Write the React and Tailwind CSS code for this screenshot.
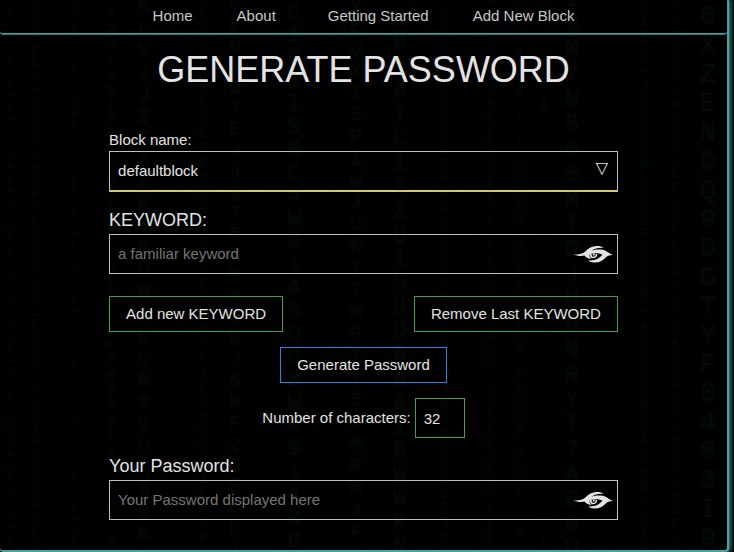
import React from 'react';

const LEVELS = {
  4: 'text-[3px] leading-[4px]',
  5: 'text-[4px] leading-[5px]',
  6: 'text-[5px] leading-[6px]',
  8: 'text-[6px] leading-[8px]',
  11: 'text-[10px] leading-[11px]',
  12: 'text-[11px] leading-[12px]',
  13: 'text-[12px] leading-[13px]',
  14: 'text-[13px] leading-[14px]',
  15: 'text-[14px] leading-[15px]',
  16: 'text-[15px] leading-[16px]',
  21: 'text-[20px] leading-[21px]',
  22: 'text-[21px] leading-[22px]',
  23: 'text-[22px] leading-[23px]',
  24: 'text-[23px] leading-[24px]',
  25: 'text-[24px] leading-[25px]',
  29: 'text-[28px] leading-[29px]',
};

// Falling code columns: centre x, row pitch, centre y of the first glyph, glyphs.
const COLUMNS = [
  [10, 12, 0, '1K0VLC15M1MY2QRPRS90R11WYULSQ5AS189QQOEGED0DH570'],
  [35, 13, 1, 'AWF7BK76XW04100RJLZC3T1U1E80DJ7GN8F1WI0A0PSE'],
  [59, 5, 2, 'KUE6S0QC4XQYVFUE1ANS0DE0CC1066J1X03XJACG60XZ1G3060FQ'],
  [74, 11, 4, '00E010SSVGREY17YPT1TCMCT0YK3W1LGCNA7LTOO711UOFAMWTH9K'],
  [95, 6, 2, 'WREXNXSYXEQ1S0U3NVT1JJ31IXQ8REIYGEIJPEAP1EX0N06KV1PKURPKH10VLWZT6NNW135I'],
  [111, 15, 1, 'J5Z5L9Q10YNJOPT1DZJ1DF0KOWMR0TS7J3Q7A'],
  [144, 22, 7, 'NLVJJ2TZZK1GVH1DCR8COA50RNT'],
  [183, 8, 2, 'V0F7YANW1RKMEC00W9UGNYSC265EI1PF0NBGTUR1EEVAKEBKP7X5DG210NEW7W40E6'],
  [203, 15, 0, 'ON31SG8N8RTPDORN3THB1R47FIKTENKLSRMJP6A'],
  [235, 21, 4, 'OLD1G7EJJ3T5CMXXDJ5HFVG50D1B'],
  [273, 8, 2, 'ANAOWEP1MOPECISVJ1S1ZVA3MSTKXUANIHIVSPFHBI8MRYWB18S1ZNEWH13VSWEK1ZZ8AK'],
  [294, 23, 13, 'C191I9BC4W01A0OO8WN914RDR'],
  [335, 8, 2, 'NAUTURCSAUOGR1ESTOGZIA7MFSV3ZUJIIT7SENGC0X8Q7ARTHE39FAZT4ARCVR1WL0'],
  [356, 22, 5, 'VEQX1SP1WJONT7MPTY50MRM4FV'],
  [400, 24, 19, 'J8I8IC17ZQ15DD8W810WWFN'],
  [445, 15, 0, '7SCXSFV1C5ZDPHP10QHAD1CG0W9B0AS4ECD9ZO'],
  [473, 8, 2, 'EFAORYJSTMI8HXVR2O1UNPCYUKNOM6FZRRLCUAD0SMYA6UCSEAGMO7EZ0CSLPGKRYU1WOI'],
  [490, 13, 2, 'WGUEYXLJKNIEWXIZYACS1PDKLJWDOJ338YR8RUO1LDEA'],
  [519, 13, 0, 'YYGAOSLA2Y11JDOOPMUQ1RZBG12MCMKXSW0953FUYH'],
  [544, 12, 2, 'WK7ZSNG0WBZQO1DOI1IJI00PHYWO0GM1YYSOKS00U6S03E'],
  [572, 25, 0, 'I9MYNS05MTDJUGNRYT7A00UU'],
  [616, 4, 1, 'EMEIUIYMXMYIVENCIOLMNSOIWEREYYAWMRSYSYRE0SIYCKRMWWYSEAMWESHSYRNYERWSISXY'],
  [627, 5, 1, '188ZTNMTIWEPNN1P1BZ162OXNIPTNYGARDVCASESDVEFKNWINMUNIUZRYSKGHURGPUYFBSEO'],
  [644, 16, 7, 'G11P4JG000MV50E200R4A8PQ0R91ZWB7XI0'],
  [675, 14, 7, 'V116QC1K60I1EF6ZFBZAXX7QAXGFQ410D51K0F1B'],
  [708, 29, 17, '6XZENDQ9DGTYF0483I9'],
];

function CodeRain() {
  return (
    <div
      aria-hidden="true"
      className="pointer-events-none absolute inset-0 select-none overflow-hidden font-['Liberation_Mono',monospace] text-[#2f8f48]/6 [text-shadow:0_0_6px_rgba(60,150,80,0.07)]"
    >
      {COLUMNS.map(([x, pitch, y, glyphs]) => (
        <div
          key={x}
          className={`absolute w-0 ${LEVELS[pitch]}`}
          style={{ left: x, top: y - Math.round(pitch / 2) }}
        >
          {(pitch < 8 ? glyphs + glyphs : glyphs).split('').map((g, i) => (
            <span key={i} className="flex w-0 justify-center">
              {g}
            </span>
          ))}
        </div>
      ))}
    </div>
  );
}

function EyeIcon() {
  return (
    <svg viewBox="0 0 40 17" className="h-[17px] w-10 fill-[#e4e4e4]" aria-hidden="true">
      <path d="M0 8.2C5 8.700 9 8.200 12 5.800C15.500 2.200 19 .3 23.500 .1C26.500 0 29 .6 30.700 1.800C26 1.400 21.500 2.200 18.400 4.800C23 3.300 29 3 33 5C35.500 6.300 36.500 7.800 40 9C36 9.300 34.300 10 32.500 11.700C29.500 14.800 26 16.700 21 16.500C18.500 16.400 16.500 15.600 15 14.200C21 15.300 26 12.800 29.500 8.700C26 7 21 6.800 17.200 8C15.800 9 16.600 11.500 18.500 12.900C14.800 12.600 12.800 11.400 11.500 9.600C8 10.500 4 10 0 8.200Z" />
      <path d="M17 8C16.700 10.900 18 12.300 20 12.300C22.300 12.300 24.300 10.600 24.200 8L22.700 7.700C22.800 9.600 21.800 10.800 20.400 10.800C19 10.800 18.400 9.800 18.700 8Z" />
      <circle cx="20.800" cy="8.600" r="1.100" />
    </svg>
  );
}

function SecretField({ id, label, placeholder }) {
  return (
    <div>
      <label htmlFor={id} className="block text-lg leading-7">
        {label}
      </label>
      <div className="relative">
        <input
          id={id}
          type="text"
          placeholder={placeholder}
          className="block h-10 w-full border border-[#c0c0c0] bg-transparent pr-12 pb-0.5 pl-2 outline-none placeholder:text-[#757575]"
        />
        <button
          type="button"
          aria-label="Toggle visibility"
          className="absolute inset-y-0 right-[5px] flex items-center"
        >
          <EyeIcon />
        </button>
      </div>
    </div>
  );
}

const buttonBase = 'h-9 border px-4';

export default function App() {
  return (
    <div className="flex min-h-screen overflow-hidden bg-black pr-[5px] font-['Liberation_Sans',Arial,sans-serif] text-[15px] leading-5 text-[#e4e4e4]">
      <div className="relative flex-1 rounded-b-[4px] border-r-2 border-b-2 border-[#4ba3a0] bg-black shadow-[1px_0_4px_1px_#2f7f7c]">
        <header className="rounded-b-[3px] border-b border-[#4ba3a0] pt-1.5 pb-[7px] shadow-[0_1px_1px_#2f7f7c]">
          <nav className="flex justify-center gap-[52px] text-[#c8c8c8]">
            <div className="flex gap-11">
              <a href="#home">Home</a>
              <a href="#about">About</a>
            </div>
            <div className="flex gap-11">
              <a href="#start">Getting Started</a>
              <a href="#block">Add New Block</a>
            </div>
          </nav>
        </header>

        <main className="pb-[30px]">
          <h1 className="pt-4 text-center text-4xl leading-10">GENERATE PASSWORD</h1>

          <form className="mx-auto mt-[39px] w-[70%]" onSubmit={(e) => e.preventDefault()}>
            <label htmlFor="block-name" className="block leading-[22px]">
              Block name:
            </label>
            <div className="relative">
              <select
                id="block-name"
                className="block h-[41px] w-full appearance-none border border-[#c0c0c0] bg-transparent pr-8 pb-0.5 pl-2 shadow-[inset_0_-1px_#e8d320] outline-none"
              >
                <option>defaultblock</option>
              </select>
              <span
                aria-hidden="true"
                className="pointer-events-none absolute top-[5px] right-2.5 font-['DejaVu_Sans',sans-serif] text-base"
              >
                ▽
              </span>
            </div>

            <div className="mt-3.5">
              <SecretField id="keyword" label="KEYWORD:" placeholder="a familiar keyword" />
            </div>

            <div className="mt-[22px] flex justify-between">
              <button type="button" className={`${buttonBase} border-[#43a047]`}>
                Add new KEYWORD
              </button>
              <button type="button" className={`${buttonBase} border-[#43a047]`}>
                Remove Last KEYWORD
              </button>
            </div>

            <div className="mt-[15px] flex justify-center">
              <button type="submit" className={`${buttonBase} border-[#1e88e5]`}>
                Generate Password
              </button>
            </div>

            <div className="mt-[15px] flex items-center justify-center gap-1">
              <label htmlFor="length">Number of characters:</label>
              <input
                id="length"
                type="text"
                inputMode="numeric"
                defaultValue="32"
                className="h-10 w-[50px] border border-[#43a047] bg-transparent px-2 outline-none"
              />
            </div>

            <div className="mt-3.5">
              <SecretField
                id="password"
                label="Your Password:"
                placeholder="Your Password displayed here"
              />
            </div>
          </form>
        </main>
        <CodeRain />
      </div>
    </div>
  );
}
